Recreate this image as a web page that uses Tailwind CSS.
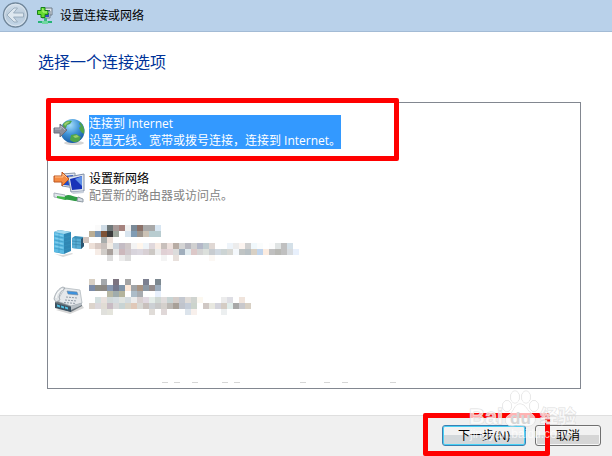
<!DOCTYPE html>
<html lang="zh-CN">
<head>
  <meta charset="UTF-8" />
  <title>设置连接或网络</title>
  <meta name="viewport" content="width=device-width, initial-scale=1" />
  <script src="https://cdn.jsdelivr.net/npm/@tailwindcss/browser@4"></script>
</head>
<body class="flex min-h-screen flex-col bg-white font-['Open_Sans','Noto_Sans_CJK_SC',sans-serif] text-xs text-black">

  <header class="flex h-8 items-center border-b border-[#a3bbd5] bg-[#b9d1ea] pl-[2px]">
    <button aria-label="返回" class="size-7">
      <svg viewBox="0 0 28 28" class="size-7">
        <defs>
          <linearGradient id="back" x1="0" y1="0" x2="0" y2="1">
            <stop offset="0" stop-color="#d5e1ec" /><stop offset=".5" stop-color="#b7c9d9" /><stop offset="1" stop-color="#c4d7e9" />
          </linearGradient>
        </defs>
        <circle cx="13.5" cy="13" r="12" fill="url(#back)" stroke="#71879b" stroke-width="1.4" />
        <circle cx="13.5" cy="13" r="10.8" fill="none" stroke="#e0e9f1" stroke-width=".8" />
        <path d="M5 13l7-7h3.500L11.500 11h10v4h-10l4 5H12z" fill="#dde7ef" stroke="#91a5b6" stroke-width=".8" />
      </svg>
    </button>
    <svg viewBox="0 0 16 17" class="ml-[7px] h-[17px] w-4">
      <path d="M5 1h10v7H5z" fill="#dbe1e7" stroke="#6f7c8a" />
      <path d="M8 3h5v3H8z" fill="#2a43bb" />
      <path d="M5 4h8v7H5z" fill="#d4dbe2" stroke="#75818d" />
      <path d="M7 6h5v4H7z" fill="#354cc4" />
      <path d="M7 11h3v3H7z" fill="#3db97e" />
      <path d="M1 14h14v2H1z" fill="#26b475" />
      <path d="M5 14h6v3H5z" fill="#70d6a1" />
      <path d="M4 .5h4v3h3v4H8v3H4v-3H.5v-4H4z" fill="#66dc30" stroke="#168318" />
      <path d="M5 2h1v3h4" stroke="#b4f581" fill="none" />
    </svg>
    <span class="ml-[7px]">设置连接或网络</span>
  </header>

  <main class="flex flex-1 flex-col pr-[31px] pb-[26px] pl-[38px]">
    <h1 class="pt-[18px] text-base leading-6 text-[#003399]">选择一个连接选项</h1>

    <div class="mt-7 ml-[9px] flex flex-1 flex-col border border-[#828790]">
      <button class="relative flex h-14 items-center gap-1 pt-px pl-[5px] text-left">
        <svg viewBox="0 0 32 32" class="size-8">
          <defs>
            <radialGradient id="sea" cx=".4" cy=".25" r=".8">
              <stop offset="0" stop-color="#a5defa" /><stop offset=".5" stop-color="#3f92d8" /><stop offset="1" stop-color="#12559e" />
            </radialGradient>
          </defs>
          <ellipse cx="21" cy="27" rx="10" ry="2" fill="#d5d5d5" />
          <circle cx="19.500" cy="15" r="12" fill="url(#sea)" />
          <path d="M10 8c2-3 6-4 9-3l-2 3-3 1-1 3-3 1zM27 6c4 4 5 8 4 12l-3-2-2-4 2-2-2-2zM18 19l5-1 5 3-2 4c-3 2-7 1-9-1z" fill="#4fa54b" />
          <path d="M11 8c2-2 4-3 6-2l-3 2-2 2zM20 20l4-1 2 2-4 1z" fill="#9ccd6c" />
          <path d="M1 12h6V8l7 6-7 7v-4H1z" fill="#8b8e9b" stroke="#6b6f7c" />
          <path d="M2 13h6v-3l4 4" fill="none" stroke="#b7bac4" />
        </svg>
        <span class="bg-[#3399ff] leading-[17px] text-white">
          <span class="block">连接到 Internet</span>
          <span class="block">设置无线、宽带或拨号连接，连接到 Internet。</span>
        </span>
        <span class="absolute top-[-5px] -left-0.5 h-[63px] w-[353px] rounded-xs border-[5px] border-[#ff0000]"></span>
      </button>

      <button class="flex h-14 items-center gap-1 pl-[5px] text-left">
        <svg viewBox="0 0 32 32" class="size-8">
          <path d="M9 3l13-1v15L9 15z" fill="#e4e9ef" stroke="#8c98aa" />
          <path d="M11 5l9-1v11l-9-1z" fill="#1f4bc9" />
          <path d="M15 6l16-3v17l-13 1z" fill="#dfe5ed" stroke="#8290a8" />
          <path d="M17 8l12-3v13l-10 1z" fill="#1833b9" />
          <path d="M22 8l7-3v10z" fill="#5e90e7" />
          <path d="M18 21l12-1 1 2-11 1z" fill="#c8d0dc" />
          <path d="M1 5h8V1l7 7-7 7v-4H1z" fill="#f58b42" stroke="#bd5621" />
          <path d="M2 6h8V3l4 4" fill="none" stroke="#ffc28e" />
          <path d="M1 22l11 2v4L1 26z" fill="#e0e6eb" stroke="#a6b0ba" />
          <path d="M4 25l8 1v3l-8-2z" fill="#42b84b" />
          <path d="M12 25c5-3 8 2 15 1v4c-6 1-10-2-15-1z" fill="#2e9c44" />
          <path d="M25 26l5 2v3l-6-1z" fill="#d5dce3" stroke="#8f9aa5" />
        </svg>
        <span class="leading-[17px]">
          <span class="block">设置新网络</span>
          <span class="block text-[#838383]">配置新的路由器或访问点。</span>
        </span>
      </button>

      <button aria-label="选项三" class="flex h-14 items-center gap-1 pl-[5px]">
        <svg viewBox="0 0 32 32" class="size-8">
          <path d="M2 27l7 1 10-2 1 1-10 3z" fill="#d9d9d9" />
          <path d="M19 11l3-2 9 1v9l-3 3-9-1z" fill="#3b91bb" />
          <path d="M19 11l9 1v10l-9-1z" fill="#58aed4" />
          <path d="M28 12l3-2v9l-3 3z" fill="#2b546f" />
          <path d="M19 14l9 1M19 17l9 1M23 11v10" stroke="#3a86ae" stroke-width=".7" fill="none" />
          <path d="M1 5l5-2 12 2v19l-7 3-10-2z" fill="#2f87b4" />
          <path d="M1 5l10 2v20L1 25z" fill="#5cbbe4" />
          <path d="M1 5l5-2 12 2-7 2z" fill="#a3daf0" />
          <path d="M1 9l10 2 7-2M1 13l10 2 7-2M1 17l10 2 7-2M1 21l10 2 7-2M6 6v20" stroke="#3593c0" stroke-width=".6" fill="none" />
          <path d="M2 7l8 2M2 11l8 2M2 15l8 2M2 19l8 2" stroke="#9edcf4" fill="none" stroke-width=".6" />
        </svg>
        <svg id="mosaicA" class="h-9 w-[210px] overflow-visible"></svg>
      </button>

      <button aria-label="选项四" class="flex h-14 items-center gap-1 pl-[5px]">
        <svg viewBox="0 0 32 32" class="size-8">
          <path d="M3 27l14 4 14-6-2-3-20 3z" fill="#d6d6d6" />
          <path d="M2 19l7-4 20 5v3l-11 6-16-5z" fill="#6b747b" />
          <path d="M2 20l16 4v5L2 25z" fill="#3c5261" />
          <path d="M4 21.500l3 1v2l-3-1zM8 22.500l3 1v2l-3-1zM12 23.500l3 1v2l-3-1z" fill="#53bfe2" />
          <path d="M4 18L12 5l15 2 2 13-11 3z" fill="#e5e8eb" stroke="#a9b1b8" stroke-width=".7" />
          <path d="M18 23l11-3v2l-11 5z" fill="#b7bec4" />
          <path d="M14 8l10 1 1 3-10-1z" fill="#3b91df" stroke="#75899c" stroke-width=".6" />
          <path d="M13 14l11 1M12 17l12 1M11 19.500l12 1" stroke="#929ca7" stroke-dasharray="2 1" />
          <path d="M1 16c1-6 5-11 9-12l2 1c-3 2-5 5-6 9l1 3-4 2z" fill="#dfe3e6" stroke="#8f98a0" stroke-width=".7" />
          <path d="M3 15c1-5 4-8 7-9" fill="none" stroke="#fff" />
        </svg>
        <svg id="mosaicB" class="h-10 w-[210px] overflow-visible"></svg>
      </button>

      <div class="mt-auto flex pb-[5px] pl-[114px]">
        <svg viewBox="0 0 234 1" class="h-px w-[234px]">
          <path d="M0 .5h6M12 .5h6M30 .5h6M60 .5h6M72 .5h6M138 .5h6M162 .5h6M180 .5h6M228 .5h6" stroke="#d6d6d6" />
        </svg>
      </div>
    </div>
  </main>

  <footer class="relative flex h-[41px] items-start justify-end gap-[9px] border-t border-[#dfdfdf] bg-[#f0f0f0] pt-[9px] pr-[11px]">
    <div class="relative">
      <button class="block h-[21px] w-[84px] rounded-[3px] border border-[#3c7fb1] bg-linear-to-b from-[#f2f2f2] from-50% to-[#d3d8db] to-50% leading-[18px] inset-ring inset-ring-[#48d1f5]">下一步(N)</button>
      <span class="absolute -top-3 -left-[19px] h-[43px] w-[127px] rounded-xs border-[5px] border-[#ff0000]"></span>
    </div>
    <button class="h-[21px] w-[66px] rounded-[3px] border border-[#707070] bg-linear-to-b from-[#f2f2f2] from-50% to-[#d6d6d6] to-50% leading-[18px] inset-ring inset-ring-[#f7f7f7]">取消</button>

    <!-- watermark lies over the buttons -->
    <svg viewBox="0 0 112 54" class="pointer-events-none absolute right-8 bottom-3 h-[54px] w-28" font-family="Liberation Sans, Noto Sans CJK SC, sans-serif" font-weight="bold">
      <g fill="#fff" fill-opacity=".7" stroke="#d5d5d5" stroke-opacity=".8" paint-order="stroke">
        <ellipse cx="47" cy="7" rx="4.500" ry="6" />
        <ellipse cx="58" cy="7" rx="4.500" ry="6" />
        <ellipse cx="39" cy="16" rx="4.500" ry="5.500" />
        <ellipse cx="66" cy="16" rx="4.500" ry="5.500" />
        <path d="M52 14c6 0 7 7 12 10s4 12-4 12c-5 0-10-1-15 0-8 1-10-8-4-11 5-3 5-11 11-11z" />
        <text x="1" y="34" font-size="22">Bai</text>
        <text x="72" y="33" font-size="18">经验</text>
        <text x="2" y="48" font-size="12" font-weight="normal" stroke="none">jingyan.baidu.com</text>
      </g>
      <text x="42" y="34" font-size="17" fill="#d5d5d5">du</text>
    </svg>
  </footer>

  <script>
    // blurred captions: one array entry per row, as column:colour
    const mosaics = {
      mosaicA: [
        '1:fafafa 2:cfdce6 3:6e7778 4:a89a98 5:a5827e 6:f0f0f0 7:7a8a98 8:8a7068 9:a8a8a8 10:a8a8a8 11:d8e6f2',
        '0:bcae94 1:7c97b4 2:7e5236 3:3c3c3c 4:9ea69c 6:d8e4ee 7:809cb4 8:9c948c 9:cbc2b5 10:b8ccd0 11:b8ccd0',
        '-1:d0c4be 2:a8adac 3:ede0d8',
        '0:ede0d8 1:d8cac4 2:c8c0bc 3:f2ece4 4:ccd4dc 5:c4bcc4 6:d0c8c8 7:f4f4f4 8:fff6ec 9:eef4f8 10:e0d8dc 11:f8ece4 12:c8c0bc 13:ede0dc 14:b8aca4 15:d4d4d4 16:b8b8c0 17:d0d0d0 18:b4b8c8 19:c0ccd0 20:e0d8d4 23:eef4fa 24:ececec 25:fcf4f0 26:d0d0d0 27:f0f8fc 28:fafcfc 30:fcfcfc 31:e0e4e4 32:c0c0c0 33:d4e0e8',
        '1:f6ece6 2:d0ccc8 3:a8a09c 4:e4e4e4 5:ccb8bc 6:d0c8cc 7:d8d4dc 8:dcd8e0 9:d8d0d4 10:ccc8c4 11:ececec 12:e0d0d4 13:e4d4d8 14:dcdcdc 15:a0aebc 16:e0eaee 17:dcc8c8 18:d4d4d4 19:dce0dc 20:c8ccd0 21:d0d8e0 22:ccd4d4 23:d8d8d4 24:f4f8fc 25:c0c4c4 26:b8c0c4 27:d8d0c4 28:c0d4ec 29:fcece0 30:c0c0c0 31:b8b8b4 32:c0c0c0 33:d8dce0 34:e8f0fc',
        '3:dcdcdc 5:ececec 6:dcdcdc 12:f4f4f4 14:e8e0dc 20:fcf8f4'
      ],
      mosaicB: [
        '0:d8d0c4 2:a4a8ac 4:7c7480 6:a4a4a4 9:7c8090 11:7c8890',
        '0:7c8ca8 1:8c8c84 2:8c8884 3:8898b0 4:74788c 5:8094a8 6:fce8d8 7:a0a4a8 8:a89484 9:8c98a4 10:948c8c 11:9cacbc',
        '3:b8b8a4 4:a0acac 5:b4b49c 7:acbcc8 8:a8acb0 11:e8f0fc',
        '1:d4e0e0 2:e8e0dc 3:d0d8d8 4:d4dce0 5:e0e4e0 6:d4dce0 7:ececec 8:d8d0d0 9:e0d8e0 10:e4ece8 11:d0d8d4 12:e0dcdc 13:c8d4d4 14:d4ccc8 15:c4c8d0 16:e0dcd8 17:d0d4d0 18:fcf8f0 22:ececec 23:dedee4 25:f0e4dc',
        '0:dcd4cc 1:dcd8dc 2:e0dcd4 3:c8bcc4 4:d8d8d8 5:c8d4d4 6:d8d4c8 7:e0c8b8 8:d8d8d4 9:c8c0bc 10:ccd0d4 11:c8c8c8 12:d4d0cc 13:bcb8b4 14:a8a098 15:c0c4cc 16:c4ccd8 17:ccd4cc 19:d0c8c4 20:e8e8e0 21:d4d4dc 22:d4ccc4 23:e0ecea 24:a8a8a8 25:c8c8cc 26:d8d0c4',
        '2:e0e0dc 3:e4e4dc 10:e0dcd8 12:e0d8d8 16:dce4ec 17:f8f0ec 22:eceff0'
      ]
    };

    for (const id in mosaics) {
      document.getElementById(id).innerHTML = mosaics[id].map((row, y) =>
        row.split(' ').map(cell => {
          const [x, color] = cell.split(':');
          return `<rect x="${x * 6}" y="${y * 6}" width="6" height="6" fill="#${color}" />`;
        }).join('')
      ).join('');
    }
  </script>

</body>
</html>
